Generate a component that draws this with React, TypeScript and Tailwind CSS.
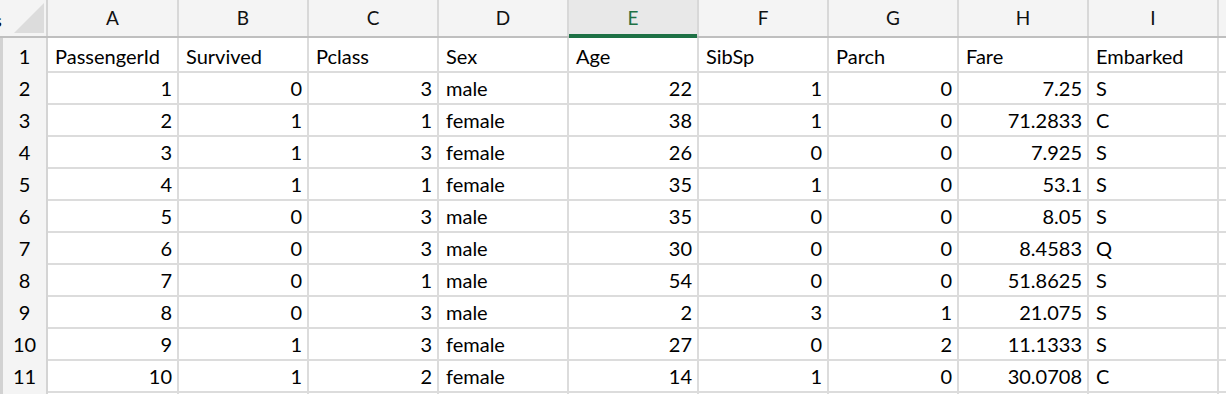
import React from "react";

const cols = ["A", "B", "C", "D", "E", "F", "G", "H", "I"];
const header = ["PassengerId", "Survived", "Pclass", "Sex", "Age", "SibSp", "Parch", "Fare", "Embarked"];
const rows: (string | number)[][] = [
  [1, 0, 3, "male", 22, 1, 0, 7.25, "S"],
  [2, 1, 1, "female", 38, 1, 0, 71.2833, "C"],
  [3, 1, 3, "female", 26, 0, 0, 7.925, "S"],
  [4, 1, 1, "female", 35, 1, 0, 53.1, "S"],
  [5, 0, 3, "male", 35, 0, 0, 8.05, "S"],
  [6, 0, 3, "male", 30, 0, 0, 8.4583, "Q"],
  [7, 0, 1, "male", 54, 0, 0, 51.8625, "S"],
  [8, 0, 3, "male", 2, 3, 1, 21.075, "S"],
  [9, 1, 3, "female", 27, 0, 2, 11.1333, "S"],
  [10, 1, 2, "female", 14, 1, 0, 30.0708, "C"],
];

const grid = "grid grid-cols-[48px_131px_repeat(8,130px)_1fr]";

export default function App() {
  return (
    <div
      className="w-[1226px] h-[394px] overflow-hidden bg-white text-black"
      style={{ fontFamily: "Lato, 'Open Sans', sans-serif" }}
    >
      {/* column header row */}
      <div className={`${grid} h-[38px] bg-[#f4f4f4] border-b-2 border-[#bfbfbf]`}>
        <div className="relative border-r-2 border-[#d4d4d4]">
          <div className="absolute left-0 top-[11px] w-[3px] overflow-hidden text-[18px] leading-none text-black">
            <span className="relative -left-[6px]">s</span>
          </div>
          <svg className="absolute left-[14px] top-[3px]" width="30" height="30" viewBox="0 0 30 30">
            <polygon points="0,30 30,30 30,0" fill="#dcdcdc" />
          </svg>
        </div>
        {cols.map((c) => (
          <div
            key={c}
            className={
              c === "E"
                ? "relative flex items-center justify-center border-r-2 border-[#d8d8d8] bg-[#e8e8e8] text-[19px] text-[#1e7145]"
                : "flex items-center justify-center border-r-2 border-[#d8d8d8] text-[19px] text-[#111111]"
            }
          >
            {c}
            {c === "E" && <div className="absolute left-0 right-0 -bottom-[2px] h-[4px] bg-[#1e7145]" />}
          </div>
        ))}
        <div />
      </div>

      {/* header data row */}
      <Row num={1}>
        {header.map((h) => (
          <Cell key={h} text={h} />
        ))}
      </Row>

      {rows.map((r, i) => (
        <Row key={i} num={i + 2}>
          {r.map((v, j) => (
            <Cell key={j} text={String(v)} right={typeof v === "number"} />
          ))}
        </Row>
      ))}
      <Row num={null}>
        {cols.map((c) => (
          <Cell key={c} text="" />
        ))}
      </Row>
    </div>
  );
}

function Row({ num, children }: { num: number | null; children: React.ReactNode }) {
  return (
    <div className={`${grid} h-[32px]`}>
      <div className="relative flex items-center justify-center border-r-2 border-b-2 border-[#d4d4d4] bg-[#f4f4f4] pt-[3px] pl-[3px] text-[20px] text-black">
        <div className="absolute left-0 top-0 bottom-0 w-[3px] bg-[#d2d2d2]" />
        {num}
      </div>
      {children}
      <div className="border-b-2 border-[#dcdcdc]" />
    </div>
  );
}

function Cell({ text, right }: { text: string; right?: boolean }) {
  return (
    <div
      className={`flex items-center whitespace-nowrap overflow-hidden border-r-2 border-b-2 border-[#dcdcdc] pt-[2px] text-[20px] ${
        right ? "justify-end pr-[5px]" : "justify-start pl-[7px]"
      }`}
    >
      {text}
    </div>
  );
}
